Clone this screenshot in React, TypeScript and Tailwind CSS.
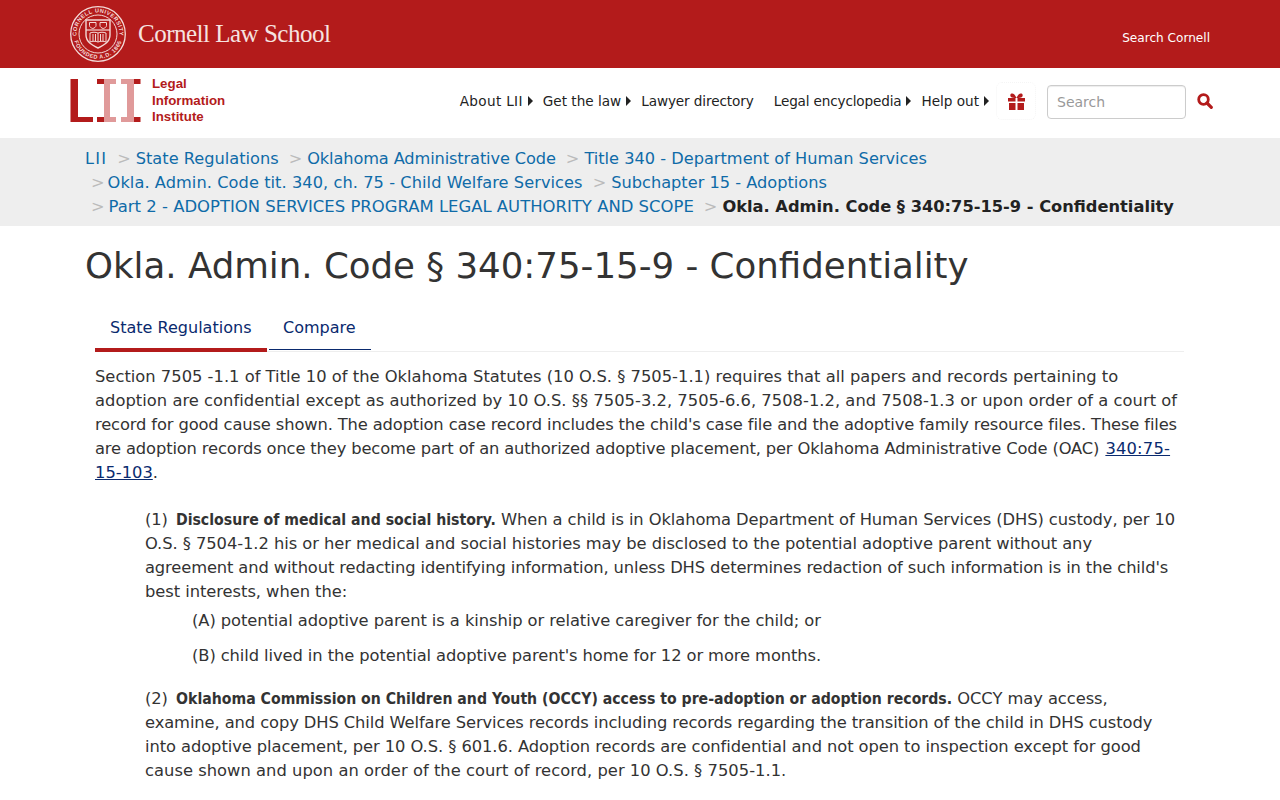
const font = "font-['DejaVu_Sans',sans-serif]";

function Seal() {
  return (
    <svg width="56" height="56" viewBox="0 0 56 56" fill="none" stroke="#f3d9d6">
      <defs>
        <path id="sealTop" d="M6.500 28a21.500 21.500 0 0 1 43 0" />
        <path id="sealBottom" d="M3.200 28a24.800 24.800 0 0 0 49.600 0" />
      </defs>
      <circle cx="28" cy="28" r="27.300" strokeWidth="1.300" />
      <circle cx="28" cy="28" r="19" strokeWidth="1" />
      <text fill="#f3d9d6" stroke="none" fontSize="5.600" fontWeight="700" fontFamily="'Liberation Sans',sans-serif" letterSpacing="0.500">
        <textPath href="#sealTop" startOffset="50%" textAnchor="middle">CORNELL UNIVERSITY</textPath>
      </text>
      <text fill="#f3d9d6" stroke="none" fontSize="5.600" fontWeight="700" fontFamily="'Liberation Sans',sans-serif" letterSpacing="0.500">
        <textPath href="#sealBottom" startOffset="50%" textAnchor="middle">FOUNDED A.D. 1865</textPath>
      </text>
      <path d="M16 14h24v15c0 7-6 10-12 13-6-3-12-6-12-13z" strokeWidth="1.400" />
      <path d="M16 24h24" strokeWidth="1.200" />
      <path d="M19.500 16.500h6.500v3c0 1.500-1.500 2.500-3.200 3-1.800-.5-3.300-1.500-3.300-3zM30 16.500h6.500v3c0 1.500-1.500 2.500-3.300 3-1.700-.5-3.200-1.500-3.200-3z" strokeWidth="1" />
      <path d="M20 27c2.500-1 5.500-1 8 0 2.500-1 5.500-1 8 0v9c-2.500-1-5.500-1-8 0-2.500-1-5.500-1-8 0zM28 27v9M23 28v7M25.500 28v7M30.500 28v7M33 28v7" strokeWidth="1" />
    </svg>
  );
}

function LiiLogo() {
  return (
    <svg width="72" height="45" viewBox="0 0 72 45">
      <path d="M.5 0H8v38h15v5H.5z" fill="#b31b1b" />
      <path d="M27 0h7v5h-7zM27 38h7v5h-7zM64 0h6.500v5H64zM64 38h6.500v5H64z" fill="#b31b1b" />
      <path d="M34 0h12v5h-6v33h6v5H34v-5h0V5h0z" fill="#e09a9a" />
      <path d="M51 0h13v43H51v-5h6V5h-6z" fill="#e09a9a" />
    </svg>
  );
}

function Caret() {
  return <span className="ml-[5px] inline-block h-0 w-0 border-y-[5px] border-l-[5px] border-y-transparent border-l-[#222]" />;
}

function Sep() {
  return <span className="ml-[10px] mr-[5px] text-[#bbb]">&gt;</span>;
}

function Crumb({ children }: { children: React.ReactNode }) {
  return <a className="text-[#0f6ba8]">{children}</a>;
}

function Strong({ children }: { children: React.ReactNode }) {
  return <b className="ml-[3px] font-['DejaVu_Sans_Condensed','DejaVu_Sans',sans-serif] text-[15.68px] tracking-normal">{children}</b>;
}

export default function App() {
  return (
    <div className={`${font} h-[800px] overflow-hidden bg-white text-[#333]`}>
      <header className="flex h-[68px] items-center justify-between bg-[#b31b1b] px-[70px]">
        <div className="flex items-center gap-[12px]">
          <Seal />
          <span className="font-['Liberation_Serif',serif] text-[25px] tracking-[-0.5px] text-[#f6e3e0]">Cornell Law School</span>
        </div>
        <a className="pt-[8px] text-[12.1px] text-white">Search Cornell</a>
      </header>

      <div className="flex h-[70px] items-center pb-[4px] pl-[70px] pr-[67px]">
        <div className="flex items-center gap-[10px]">
          <LiiLogo />
          <div className="font-['Liberation_Sans',sans-serif] text-[13.3px] leading-[16.5px] font-bold text-[#b31b1b]">
            <div>Legal</div>
            <div>Information</div>
            <div>Institute</div>
          </div>
        </div>
        <nav className="ml-auto flex items-center text-[13.6px] text-[#222]">
          <a className="flex items-center tracking-[0.33px]">About LII<Caret /></a>
          <a className="ml-[10px] flex items-center">Get the law<Caret /></a>
          <a className="ml-[10px] tracking-[-0.1px]">Lawyer directory</a>
          <a className="ml-[20px] flex items-center tracking-[-0.16px]">Legal encyclopedia<Caret /></a>
          <a className="ml-[10px] flex items-center">Help out<Caret /></a>
          <span className="ml-[7px] flex h-[38px] w-[40px] items-center justify-center rounded-md border border-dotted border-[#f5f5f5]">
            <svg width="17" height="17" viewBox="0 0 17 17" fill="#b31b1b">
              <path d="M0 5h7.500v3.500H0zM9.500 5H17v3.500H9.500zM1 10h6.500v7H1zM9.500 10H16v7H9.500z" />
              <path d="M8.500 5C7 1 5 0 3.500.5 2 1 2 3 3 4c1 .8 3 1 5.500 1zm0 0C10 1 12 0 13.500.5 15 1 15 3 14 4c-1 .8-3 1-5.500 1z" />
            </svg>
          </span>
        </nav>
        <div className="ml-[11px] mt-[2px] flex h-[34px] w-[139px] items-center rounded-[4px] border border-[#ccc] pl-[9px] pt-[1px] text-[14px] text-[#999] shadow-[inset_0_1px_1px_rgba(0,0,0,0.075)]">Search</div>
        <svg className="ml-[11px]" width="16" height="16" viewBox="0 0 16 16" fill="none" stroke="#b31b1b">
          <circle cx="6.500" cy="6.500" r="4.800" strokeWidth="2.800" />
          <path d="M10 10l4.300 4.300" strokeWidth="3.200" strokeLinecap="round" />
        </svg>
      </div>

      <div className="h-[88px] bg-[#eeeeee] pl-[85px] pt-[8px] text-[16.2px] leading-[24px]">
        <div className="pt-[1px]">
          <span className="tracking-[1.2px]"><Crumb>LII</Crumb></span><Sep /><Crumb>State Regulations</Crumb><Sep /><span className="tracking-[-0.12px]"><Crumb>Oklahoma Administrative Code</Crumb></span><Sep /><Crumb>Title 340 - Department of Human Services</Crumb>
        </div>
        <div className="pl-[6px]">
          <span className="mr-[3px] text-[#bbb]">&gt;</span><span className="tracking-[0.07px]"><Crumb>Okla. Admin. Code tit. 340, ch. 75 - Child Welfare Services</Crumb></span><Sep /><Crumb>Subchapter 15 - Adoptions</Crumb>
        </div>
        <div className="pl-[6px]">
          <span className="mr-[4px] text-[#bbb]">&gt;</span><span className="text-[16.47px]"><Crumb>Part 2 - ADOPTION SERVICES PROGRAM LEGAL AUTHORITY AND SCOPE</Crumb></span><Sep /><b className="text-[16.25px] text-[#222]">Okla. Admin. Code § 340:75-15-9 - Confidentiality</b>
        </div>
      </div>

      <h1 className="pl-[85px] pt-[18px] text-[35.6px] leading-[44px] font-normal text-[#333]">Okla. Admin. Code § 340:75-15-9 - Confidentiality</h1>

      <div className="ml-[95px] mr-[96px] mt-[20px] flex h-[44px] border-b border-[#eee] text-[16.05px] text-[#0a2a6e]">
        <div className="h-[44px] w-[172px] border-b-[4px] border-[#b31b1b] pl-[15px] pt-[8px]">State Regulations</div>
        <div className="ml-[2px] h-[42px] w-[102px] border-b border-[#0a2a6e] pl-[14px] pt-[8px]">Compare</div>
      </div>

      <div className="ml-[95px] mt-[13px] whitespace-nowrap text-[16.32px] leading-[24px]">
        <p>
          <span className="block tracking-[0.01px]">Section 7505 -1.1 of Title 10 of the Oklahoma Statutes (10 O.S. § 7505-1.1) requires that all papers and records pertaining to</span>
          <span className="block tracking-[0.03px]">adoption are confidential except as authorized by 10 O.S. §§ 7505-3.2, 7505-6.6, 7508-1.2, and 7508-1.3 or upon order of a court of</span>
          <span className="block tracking-[-0.135px]">record for good cause shown. The adoption case record includes the child's case file and the adoptive family resource files. These files</span>
          <span className="block tracking-[-0.14px]">are adoption records once they become part of an authorized adoptive placement, per Oklahoma Administrative Code (OAC) <a className="ml-[1px] text-[#0a2a6e] underline tracking-[0.2px]">340:75-</a></span>
          <span className="block"><a className="text-[#0a2a6e] underline">15-103</a>.</span>
        </p>
        <div className="ml-[50px] mt-[23px]">
          <p>
            <span className="block tracking-[-0.09px]">(1) <Strong>Disclosure of medical and social history.</Strong> When a child is in Oklahoma Department of Human Services (DHS) custody, per 10</span>
            <span className="block tracking-[-0.065px]">O.S. § 7504-1.2 his or her medical and social histories may be disclosed to the potential adoptive parent without any</span>
            <span className="block tracking-[-0.125px]">agreement and without redacting identifying information, unless DHS determines redaction of such information is in the child's</span>
            <span className="block tracking-[-0.05px]">best interests, when the:</span>
          </p>
          <p className="ml-[47px] mt-[5px] tracking-[-0.07px]">(A) potential adoptive parent is a kinship or relative caregiver for the child; or</p>
          <p className="ml-[47px] mt-[11px] tracking-[-0.09px]">(B) child lived in the potential adoptive parent's home for 12 or more months.</p>
          <p className="mt-[19px]">
            <span className="block tracking-[-0.06px]">(2) <Strong>Oklahoma Commission on Children and Youth (OCCY) access to pre-adoption or adoption records.</Strong> OCCY may access,</span>
            <span className="block tracking-[-0.1px]">examine, and copy DHS Child Welfare Services records including records regarding the transition of the child in DHS custody</span>
            <span className="block tracking-[-0.08px]">into adoptive placement, per 10 O.S. § 601.6. Adoption records are confidential and not open to inspection except for good</span>
            <span className="block tracking-[0.03px]">cause shown and upon an order of the court of record, per 10 O.S. § 7505-1.1.</span>
          </p>
        </div>
      </div>
    </div>
  );
}
